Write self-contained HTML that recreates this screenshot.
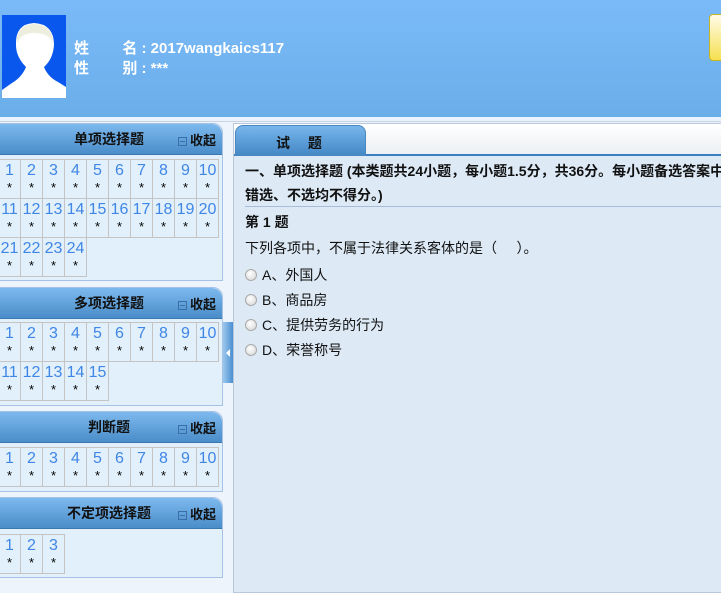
<!DOCTYPE html>
<html><head><meta charset="utf-8"><style>
*{margin:0;padding:0;box-sizing:border-box}
body{width:721px;height:582px;overflow:hidden;background:#eef4fc;font-family:"Liberation Sans","Noto Sans CJK SC",sans-serif;position:relative}
.hdr{position:absolute;left:0;top:0;width:721px;height:117px;background:linear-gradient(#7bbaf9,#6aaee9)}
.strip{position:absolute;left:0;top:117px;width:721px;height:5px;background:#eaf3fd;border-bottom:1px solid #c8d4e2}
.info{position:absolute;left:74px;color:#fff;font-weight:bold;font-size:15px;white-space:nowrap}
.ybtn{position:absolute;left:709px;top:14px;width:20px;height:47px;border:1px solid #c8b420;border-radius:4px;background:linear-gradient(#fffbe8,#f6e050)}
.pnl{position:absolute;left:-2px;width:225px;background:#e1f0fa;border:1px solid #a6c1e6;border-radius:0 10px 0 0}
.ph{height:31px;background:linear-gradient(#7db9ee,#4a8dc9);border-radius:0 10px 0 0;position:relative;border-bottom:1px solid #3c78b0}
.ph .t{position:absolute;left:0;width:220px;text-align:center;top:5px;font-size:14px;font-weight:bold;color:#111}
.ph .c{position:absolute;right:6px;top:6px;font-size:13px;font-weight:bold;color:#111}
.ph .c b{display:inline-block;width:9px;height:9px;border:1px solid #3a6ea6;margin-right:3px;vertical-align:-1px;position:relative}
.ph .c b:after{content:"";position:absolute;left:1px;top:3px;width:5px;height:1px;background:#3a6ea6}
.cell{position:absolute;width:23px;height:40px;border:1px solid #c4c4c4;text-align:center;font-size:16px;color:#3f86e6;line-height:18px;padding-top:2px}
.cell i{display:block;font-style:normal;color:#000;font-size:13px;line-height:14px;margin-top:1px}
.right{position:absolute;left:233px;top:123px;width:500px;height:470px;background:#ddeaf6;border:1px solid #b8c8dc}
.tabbar{position:absolute;left:0;top:0;width:500px;height:32px;background:linear-gradient(#ffffff,#eceff3);border-bottom:2px solid #3b7fc0}
.tab{position:absolute;left:1px;top:1px;width:131px;height:31px;background:linear-gradient(#78b6ec,#4488c6);border-radius:8px 8px 0 0;border:1px solid #4a86c0;font-size:14px;font-weight:bold;color:#111;padding:7px 0 0 40px;word-spacing:14px}
.txt{position:absolute;left:11px;font-size:14px;color:#111;white-space:nowrap}
.rd{display:inline-block;width:12px;height:12px;border-radius:50%;border:1px solid #a9a9a9;background:radial-gradient(circle at 40% 35%,#fff,#d4d4d4);vertical-align:-1px;margin-right:5px}
</style></head><body>
<div class="hdr"></div>
<div class="strip"></div>
<svg style="position:absolute;left:2px;top:15px" width="64" height="83"><rect width="64" height="83" fill="#0a57ee"/><path d="M0 75 L10 68 Q20 62 24 52 Q14 42 14 30 Q13 9 32 8 Q52 9 52 30 Q51 44 42 52 Q46 62 56 67 L64 72 L64 83 L0 83Z" fill="#fff"/><path d="M15 28 Q14 10 32 9 Q51 10 51 28 Q47 18 32 18 Q19 18 15 28Z" fill="#eeeede"/></svg>
<div class="info" style="top:37px">姓 &nbsp; &nbsp; &nbsp; &nbsp;名 : 2017wangkaics117</div>
<div class="info" style="top:57px">性 &nbsp; &nbsp; &nbsp; &nbsp;别 : ***</div>
<div class="ybtn"></div>

<div class="pnl" style="top:123px;height:158px"><div class="ph"><span class="t">单项选择题</span><span class="c"><b></b>收起</span></div></div>
<div class="pnl" style="top:287px;height:119px"><div class="ph"><span class="t">多项选择题</span><span class="c"><b></b>收起</span></div></div>
<div class="pnl" style="top:411px;height:81px"><div class="ph"><span class="t">判断题</span><span class="c"><b></b>收起</span></div></div>
<div class="pnl" style="top:497px;height:81px"><div class="ph"><span class="t">不定项选择题</span><span class="c"><b></b>收起</span></div></div>

<div id="g"></div>
<div style="position:absolute;left:223px;top:322px;width:10px;height:61px;background:linear-gradient(90deg,#9cc8ee,#4a8fd0);"></div>
<div style="position:absolute;left:226px;top:349px;width:0;height:0;border-top:4px solid transparent;border-bottom:4px solid transparent;border-right:4px solid #fff"></div>

<div class="right">
<div class="tabbar"><div class="tab">试 题</div></div>
<div class="txt" style="top:37px;font-weight:bold">一、单项选择题 (本类题共24小题，每小题1.5分，共36分。每小题备选答案中</div>
<div class="txt" style="top:61px;font-weight:bold">错选、不选均不得分。)</div>
<div style="position:absolute;left:11px;top:82px;width:490px;height:1px;background:#a8bcdc"></div>
<div class="txt" style="top:88px;font-weight:bold">第 1 题</div>
<div class="txt" style="top:114px">下列各项中，不属于法律关系客体的是（&nbsp;&nbsp;&nbsp;&nbsp;&nbsp;）。</div>
<div class="txt" style="top:141px"><span class="rd"></span>A、外国人</div>
<div class="txt" style="top:166px"><span class="rd"></span>B、商品房</div>
<div class="txt" style="top:191px"><span class="rd"></span>C、提供劳务的行为</div>
<div class="txt" style="top:216px"><span class="rd"></span>D、荣誉称号</div>
</div>
<script>
var g=document.getElementById('g'),h='';
function grid(top,n,pl){for(var i=0;i<n;i++){var r=Math.floor(i/pl),c=i%pl;h+='<div class="cell" style="left:'+(-2+c*22)+'px;top:'+(top+r*39)+'px">'+(i+1)+'<i>*</i></div>';}}
grid(159,24,10);grid(322,15,10);grid(447,10,10);grid(534,3,10);
g.innerHTML=h;
</script>
</body></html>
